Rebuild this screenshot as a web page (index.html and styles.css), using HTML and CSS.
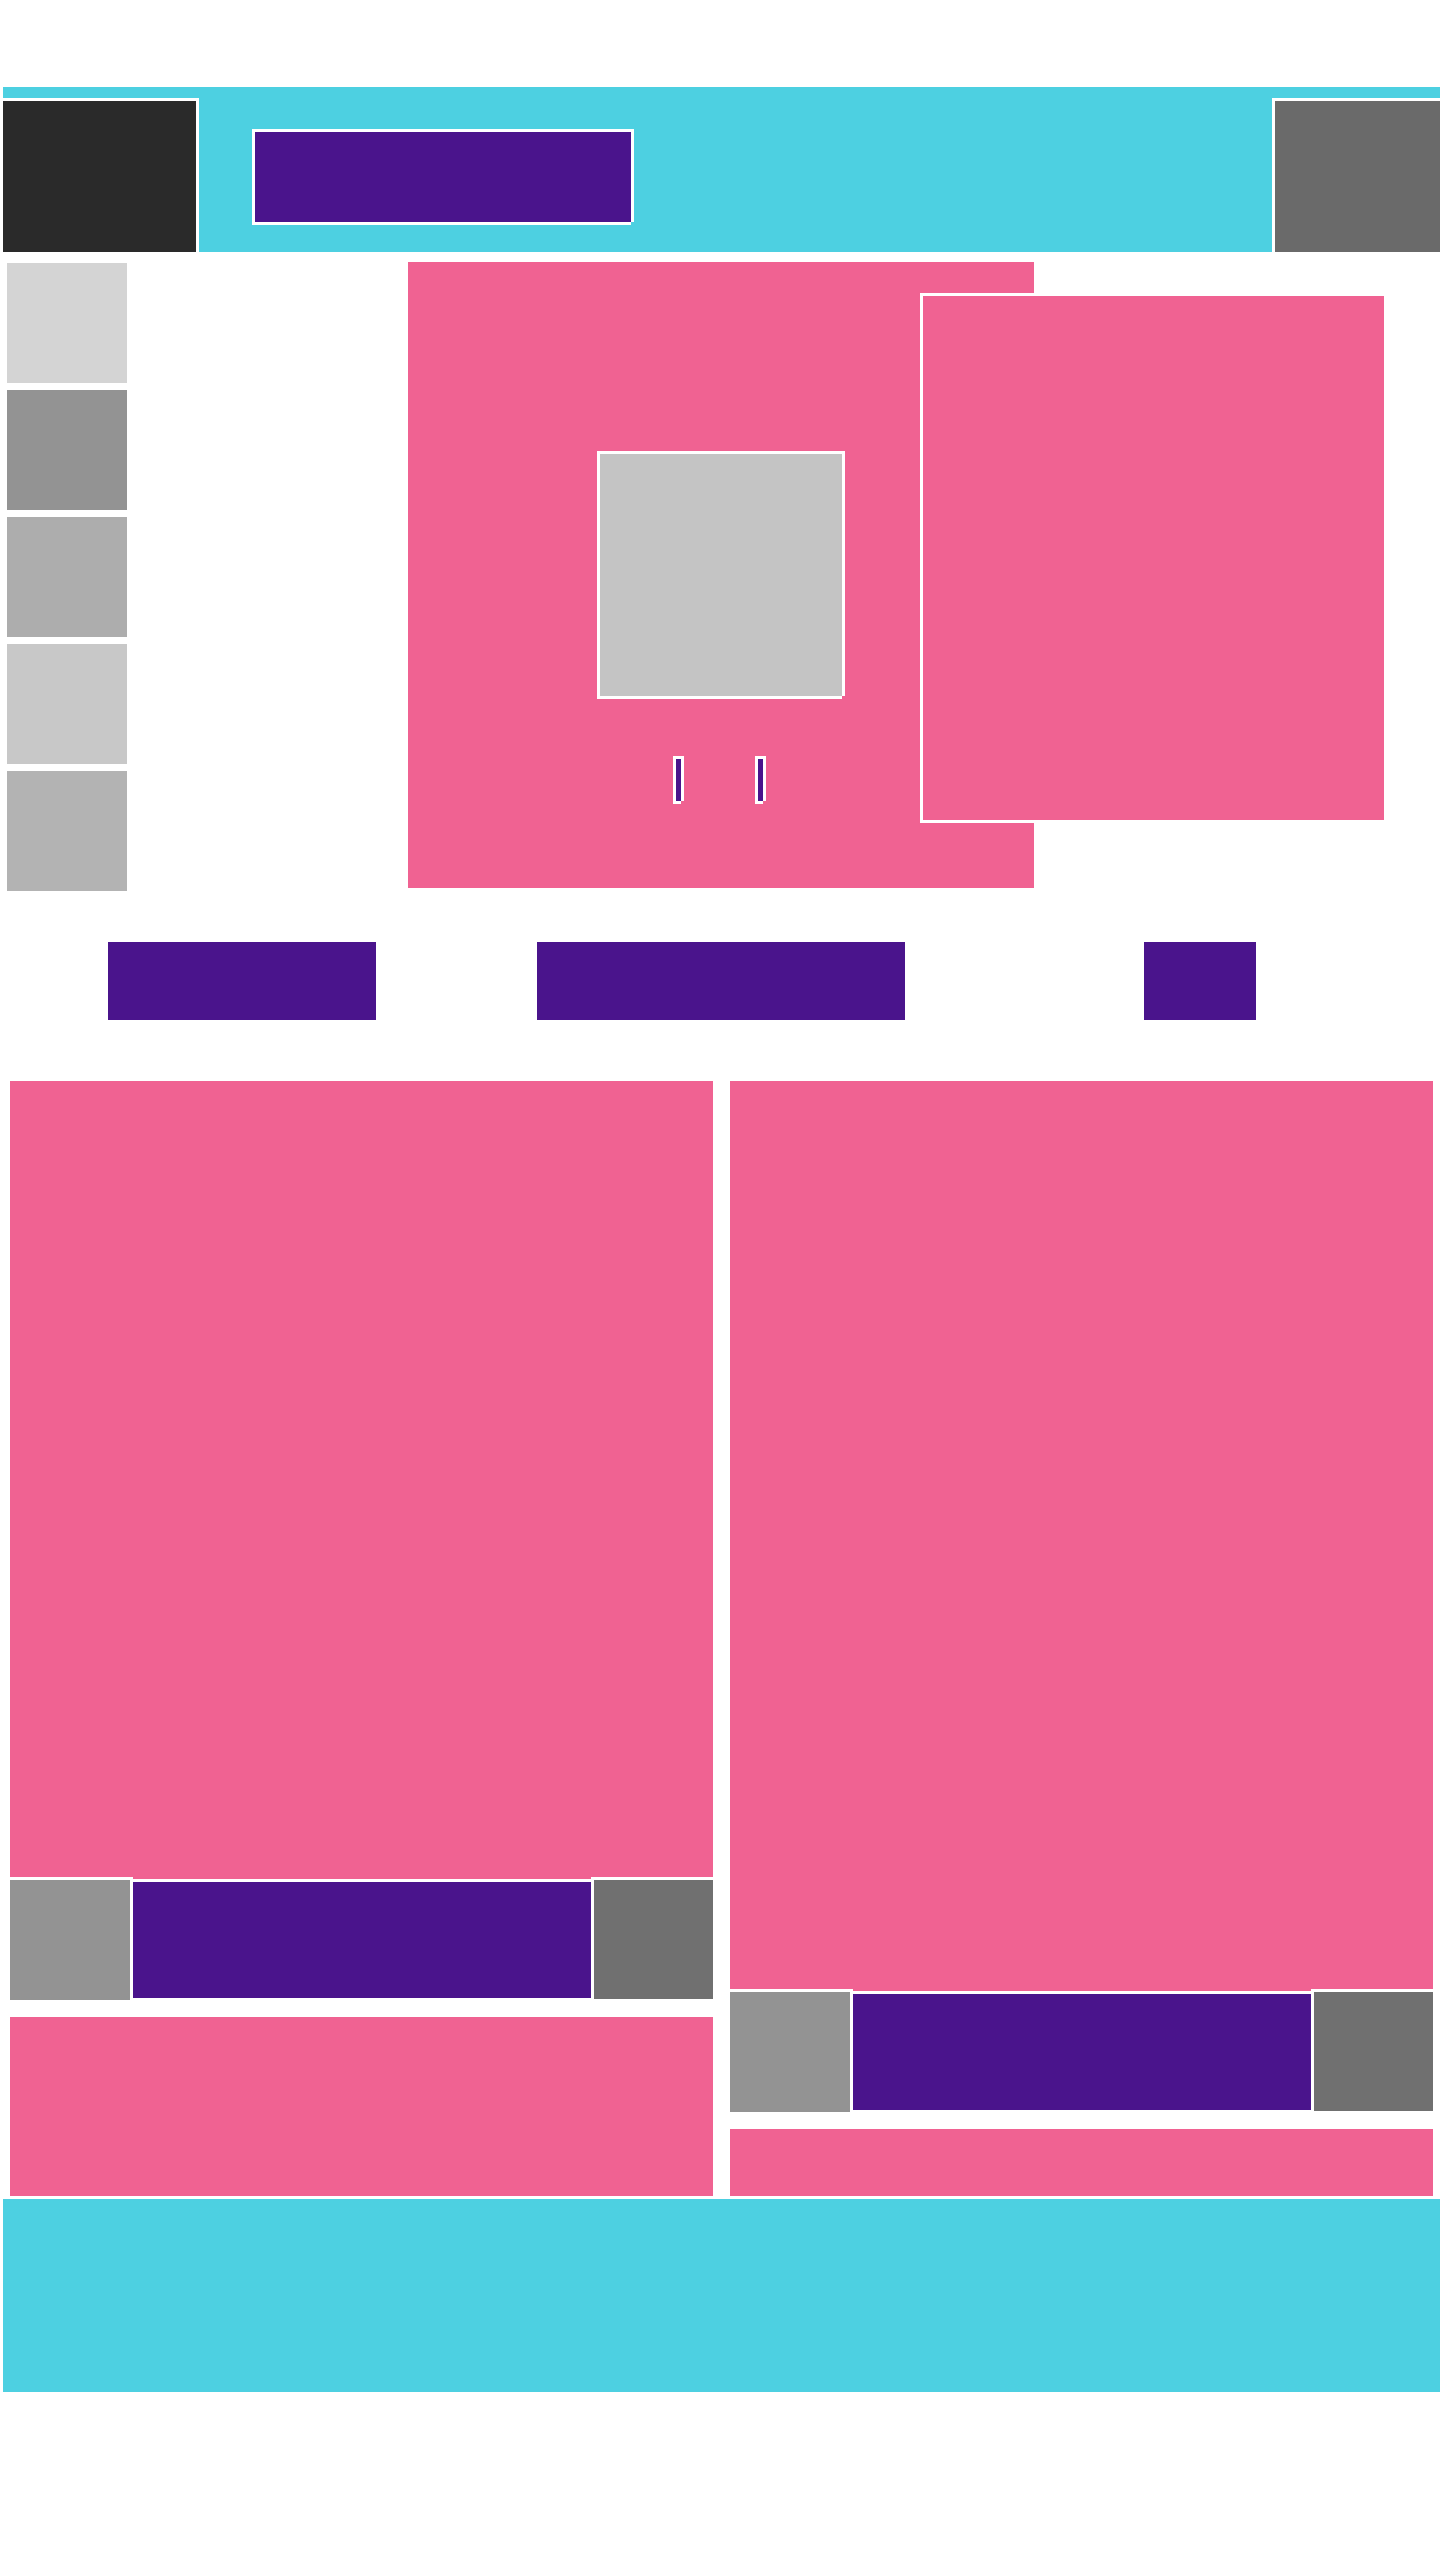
FILE: index.html
```html
<!DOCTYPE html>
<html lang="en">
<head>
<meta charset="utf-8">
<meta name="viewport" content="width=device-width, initial-scale=1">
<title>Gallery</title>
<link rel="stylesheet" href="styles.css">
</head>
<body>
<header class="topbar">
  <a class="logo" href="#" aria-label="Home"></a>
  <div class="title notched"></div>
  <button class="menu" type="button" aria-label="Menu"></button>
</header>
<main>
  <section class="hero">
    <div class="thumbs">
      <button class="thumb tone-1" type="button" aria-label="Thumbnail 1"></button>
      <button class="thumb tone-2" type="button" aria-label="Thumbnail 2"></button>
      <button class="thumb tone-3" type="button" aria-label="Thumbnail 3"></button>
      <button class="thumb tone-4" type="button" aria-label="Thumbnail 4"></button>
      <button class="thumb tone-5" type="button" aria-label="Thumbnail 5"></button>
    </div>
    <div class="stage">
      <div class="preview notched"></div>
      <div class="marks">
        <span class="mark notched"></span>
        <span class="mark notched"></span>
      </div>
    </div>
    <aside class="panel"></aside>
  </section>
  <nav class="tabs">
    <a class="tab tab-medium" href="#" aria-label="First section"></a>
    <a class="tab tab-wide" href="#" aria-label="Second section"></a>
    <a class="tab tab-small" href="#" aria-label="Third section"></a>
  </nav>
  <section class="feed">
    <div class="column">
      <article class="card">
        <div class="media"></div>
        <div class="caption">
          <div class="avatar"></div>
          <div class="name"></div>
          <button class="action" type="button" aria-label="More"></button>
        </div>
      </article>
      <article class="card-next"></article>
    </div>
    <div class="column">
      <article class="card">
        <div class="media media-tall"></div>
        <div class="caption">
          <div class="avatar"></div>
          <div class="name"></div>
          <button class="action" type="button" aria-label="More"></button>
        </div>
      </article>
      <article class="card-next card-next-short"></article>
    </div>
  </section>
</main>
<footer class="footer"></footer>
</body>
</html>
```
FILE: styles.css
```css
:root {
  --cyan: #4dd0e1;
  --purple: #4a148c;
  --pink: #f06292;
  --line: 3px solid #fff;
}

* {
  box-sizing: border-box;
}

body {
  margin: 0;
  padding-top: 87px;
  min-height: 100vh;
  background: #fff;
  font-family: "Liberation Sans", sans-serif;
}

button {
  padding: 0;
  border: 0;
  border-radius: 0;
}

.notched {
  clip-path: polygon(0 0, 100% 0, 100% calc(100% - 3px), calc(100% - 3px) calc(100% - 3px), calc(100% - 3px) 100%, 0 100%);
}

/* Header */
.topbar {
  display: flex;
  align-items: flex-start;
  margin-left: 3px;
  padding-top: 11px;
  background: var(--cyan);
}

.logo {
  width: 196px;
  height: 154px;
  border-top: var(--line);
  border-right: var(--line);
  background: #2a2a2a;
}

.title {
  width: 382px;
  height: 96px;
  margin: 31px 0 0 53px;
  border: var(--line);
  background: var(--purple);
}

.menu {
  width: 168px;
  height: 154px;
  margin-left: auto;
  border-top: var(--line);
  border-left: var(--line);
  background: #6a6a6a;
}

/* Hero */
.hero {
  position: relative;
  display: grid;
  grid-template-columns: 1fr 626px 1fr;
  align-items: start;
  margin-top: 10px;
  padding-left: 2px;
}

.thumbs {
  display: flex;
  flex-direction: column;
  gap: 7px;
  padding: 1px 0 0 5px;
}

.thumb {
  width: 120px;
  height: 120px;
}

.tone-1 { background: #d4d4d4; }
.tone-2 { background: #939393; }
.tone-3 { background: #adadad; }
.tone-4 { background: #c8c8c8; }
.tone-5 { background: #b3b3b3; }

.stage {
  display: flex;
  flex-direction: column;
  align-items: center;
  gap: 57px;
  padding: 189px 0 84px;
  background: var(--pink);
}

.preview {
  width: 248px;
  height: 248px;
  border: var(--line);
  background: #c4c4c4;
}

.marks {
  display: flex;
  gap: 71px;
  padding-right: 3px;
}

.mark {
  width: 11px;
  height: 48px;
  border: var(--line);
  background: var(--purple);
}

.panel {
  position: absolute;
  top: 31px;
  right: 53px;
  width: 467px;
  height: 530px;
  border: var(--line);
  background: var(--pink);
}

/* Section links */
.tabs {
  display: grid;
  grid-template-columns: repeat(3, 1fr);
  justify-items: center;
  margin: 51px 0 61px;
  padding-left: 2px;
}

.tab {
  height: 78px;
  background: var(--purple);
}

.tab-medium { width: 268px; }
.tab-wide { width: 368px; }
.tab-small { width: 112px; }

/* Two-column feed */
.feed {
  display: grid;
  grid-template-columns: 1fr 1fr;
  gap: 17px;
  padding: 0 7px 0 10px;
}

.column {
  display: flex;
  flex-direction: column;
  gap: 17px;
}

.media {
  height: 798px;
  background: var(--pink);
}

.media-tall {
  height: 910px;
}

.caption {
  display: flex;
  align-items: flex-start;
  margin-top: -2px;
}

.avatar {
  width: 123px;
  height: 123px;
  border-top: var(--line);
  border-right: var(--line);
  background: #939393;
}

.name {
  flex: 1;
  height: 119px;
  margin-top: 2px;
  border-top: var(--line);
  background: var(--purple);
}

.action {
  width: 122px;
  height: 122px;
  border-top: var(--line);
  border-left: var(--line);
  background: #707070;
}

.card-next {
  flex: 1;
  min-height: 179px;
  background: var(--pink);
}

.card-next-short {
  min-height: 67px;
}

/* Footer */
.footer {
  height: 193px;
  margin: 3px 0 0 3px;
  background: var(--cyan);
}
```
